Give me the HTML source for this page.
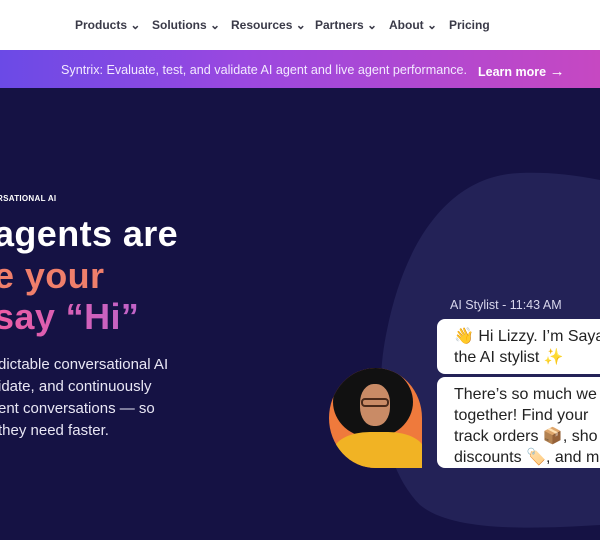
<!DOCTYPE html>
<html><head><style>
*{margin:0;padding:0;box-sizing:border-box}
body{width:600px;height:540px;overflow:hidden;background:#151244;font-family:"Liberation Sans",sans-serif;position:relative}
.nav{position:absolute;top:0;left:0;width:600px;height:50px;background:#fff}
.nav span{position:absolute;top:18px;font-size:12px;font-weight:bold;color:#3a3a48}
.bar{position:absolute;top:50px;left:0;width:600px;height:38px;background:linear-gradient(90deg,#6b4ae6,#9a48e0 40%,#c648c2)}
.bar .t{position:absolute;left:61px;top:13px;font-size:12.6px;color:#f3eaff}
.bar .l{position:absolute;left:478px;top:13px;font-size:12.5px;font-weight:bold;color:#fff}
.h{position:absolute;left:-6px;font-weight:bold;font-size:36px;letter-spacing:0.4px}
.p{position:absolute;left:-2px;font-size:15px;color:#e8e6f4}
.bub{position:absolute;left:437px;width:180px;background:#fff;border-radius:8px;font-size:16px;color:#222;padding:7px 0 0 17px;line-height:21px}
</style></head><body>
<div class="nav">
<span style="left:75px">Products ⌄</span>
<span style="left:152px">Solutions ⌄</span>
<span style="left:231px">Resources ⌄</span>
<span style="left:315px">Partners ⌄</span>
<span style="left:389px">About ⌄</span>
<span style="left:449px">Pricing</span>
</div>
<div class="bar"><div class="t">Syntrix: Evaluate, test, and validate AI agent and live agent performance.</div><div class="l">Learn more <span style="font-size:15px">→</span></div></div>
<svg style="position:absolute;left:0;top:0" width="600" height="540"><path d="M520 173 C450 175 405 240 387 330 C372 400 385 470 420 505 C450 530 520 530 600 525 L600 180 C570 174 545 172 520 173Z" fill="#232257"/></svg>
<div style="position:absolute;left:-3px;top:194px;font-size:8px;font-weight:bold;color:#fff;letter-spacing:0.3px">RSATIONAL AI</div>
<div class="h" style="top:213px;color:#fff">agents are</div>
<div class="h" style="top:255px;color:#f07f6b">e your</div>
<div class="h" style="top:296px;background:linear-gradient(90deg,#ee5ca2,#c063c8);-webkit-background-clip:text;color:transparent">say “Hi”</div>
<div class="p" style="top:356px">dictable conversational AI</div>
<div class="p" style="top:378px">idate, and continuously</div>
<div class="p" style="top:400px">ent conversations — so</div>
<div class="p" style="top:422px">they need faster.</div>
<div style="position:absolute;left:450px;top:298px;font-size:12.5px;color:#d8d6ec">AI Stylist - 11:43 AM</div>
<div class="bub" style="top:319px;height:55px">👋 Hi Lizzy. I’m Saya<br>the AI stylist ✨</div>
<div class="bub" style="top:377px;height:91px">There’s so much we<br>together! Find your<br>track orders 📦, sho<br>discounts 🏷️, and m</div>
<div style="position:absolute;left:329px;top:368px;width:93px;height:100px;background:#ef7a3c;border-radius:50% 50% 0 50%;overflow:hidden">
<div style="position:absolute;left:4px;top:-2px;width:80px;height:72px;background:#111;border-radius:50%"></div>
<div style="position:absolute;left:31px;top:16px;width:30px;height:42px;background:#c98b66;border-radius:45%"></div>
<div style="position:absolute;left:32px;top:30px;width:28px;height:9px;border:2px solid #4a2a1a;border-radius:4px"></div>
<div style="position:absolute;left:4px;top:64px;width:92px;height:50px;background:#f1b324;border-radius:40% 40% 0 0"></div>
</div>
</body></html>
